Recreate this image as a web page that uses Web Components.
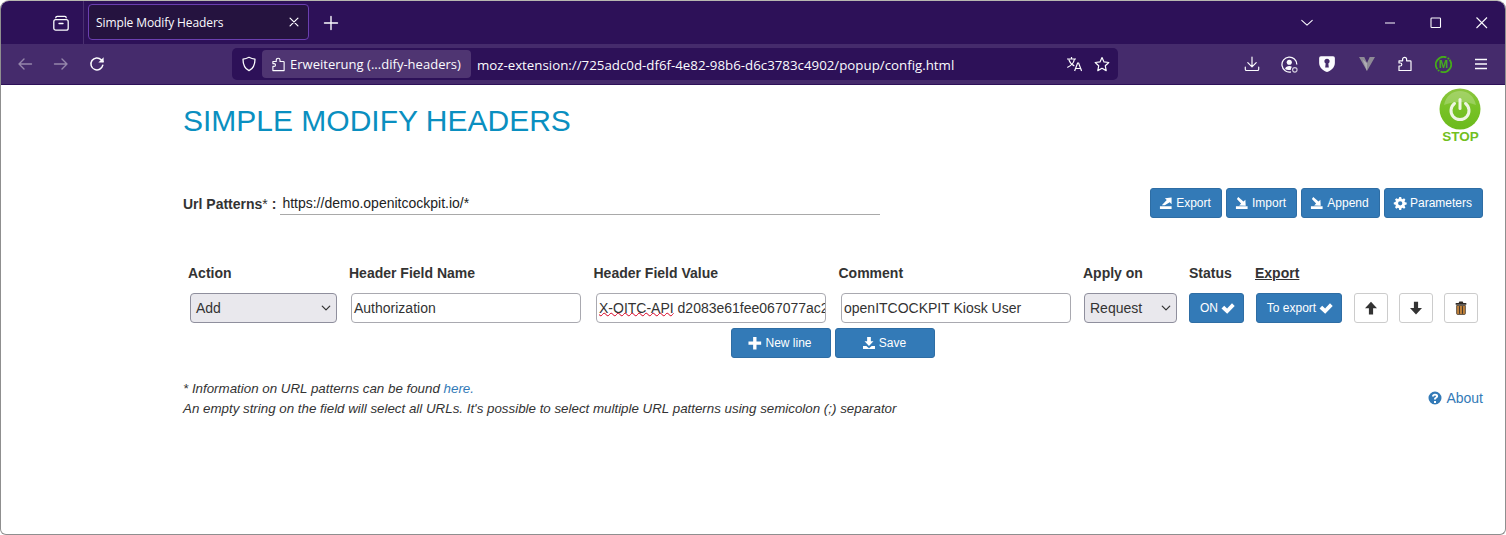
<!DOCTYPE html>
<html lang="de">
<head>
<meta charset="utf-8">
<title>Simple Modify Headers</title>
<style>
html,body{margin:0;padding:0;height:100%;background:#fff;overflow:hidden}
body{font-family:"Liberation Sans",Arial,sans-serif}
</style>
</head>
<body>
<browser-window>
  <browser-tabbar slot="tabbar"></browser-tabbar>
  <browser-navbar slot="navbar"></browser-navbar>
  <smh-page></smh-page>
</browser-window>

<script>
const ICONS = {
  tabs:'<g fill="none" stroke="currentColor" stroke-width="1.3"><rect x=".8" y="4.700" width="14.400" height="10.500" rx="2"/><path d="M2.800 2.800c0-.9.600-1.400 1.400-1.400h7.600c.8 0 1.400.5 1.400 1.400M6 8.500h4" stroke-linecap="round"/></g>',
  close:'<path d="M3.500 3.500l9 9M12.500 3.500l-9 9" stroke="currentColor" stroke-width="1.400" fill="none" stroke-linecap="round"/>',
  plus:'<path d="M8 1.500v13M1.500 8h13" stroke="currentColor" stroke-width="1.400" fill="none" stroke-linecap="round"/>',
  chevron:'<path d="M2 5l6 5.500L14 5" stroke="currentColor" stroke-width="1.200" fill="none" stroke-linecap="round" stroke-linejoin="round"/>',
  selchev:'<path d="M2 5l6 6 6-6" stroke="currentColor" stroke-width="2" fill="none" stroke-linecap="round" stroke-linejoin="round"/>',
  minimize:'<path d="M3 8h10" stroke="currentColor" stroke-width="1.100" fill="none"/>',
  maximize:'<rect x="3" y="3" width="9.500" height="9.500" rx=".8" stroke="currentColor" stroke-width="1.100" fill="none"/>',
  winclose:'<path d="M2.500 2.500l10.500 10.500M13 2.500L2.500 13" stroke="currentColor" stroke-width="1.100" fill="none"/>',
  back:'<path d="M14.500 8H2M7 3L2 8l5 5" stroke="currentColor" stroke-width="1.400" fill="none" stroke-linecap="round" stroke-linejoin="round"/>',
  forward:'<path d="M1.500 8H14M9 3l5 5-5 5" stroke="currentColor" stroke-width="1.400" fill="none" stroke-linecap="round" stroke-linejoin="round"/>',
  reload:'<path d="M13.800 9.200A6 6 0 1 1 12.200 3.700L14 5.500" stroke="currentColor" stroke-width="1.500" fill="none" stroke-linecap="round"/><path d="M14.600 1.200v5.200H9.400z" fill="currentColor"/>',
  shield:'<path d="M8 1.300c2 1.100 3.900 1.700 6 1.900 0 5.500-1.700 9.400-6 11.500C3.700 12.600 2 8.700 2 3.200c2.100-.2 4-.8 6-1.900z" stroke="currentColor" stroke-width="1.300" fill="none" stroke-linejoin="round"/>',
  puzzle:'<path d="M2 14.500V10h1.300a1.500 1.500 0 0 0 0-3H2V4.800h3.600V3.300a2 2 0 0 1 4 0v1.500h3.600c.5 0 .8.300.8.800v8.900z" stroke="currentColor" stroke-width="1.200" fill="none" stroke-linejoin="round"/>',
  translate:'<path d="M1 3h9M5.500 1v2M8.500 3C7.800 6.800 5 9.800 1.300 11.500M2.800 3.600c1 3 3 5.100 5.500 6.300" stroke="currentColor" stroke-width="1.200" fill="none"/><path d="M8.600 15l3-8h1l3 8M9.800 12.500h4.700" stroke="currentColor" stroke-width="1.200" fill="none"/>',
  star:'<path d="M8 1.500l2 4.400 4.800.6-3.500 3.300.9 4.800L8 12.300l-4.200 2.300.9-4.800L1.200 6.500 6 5.900z" stroke="currentColor" stroke-width="1.200" fill="none" stroke-linejoin="round"/>',
  download:'<path d="M8 1v9.500M3.800 6.600L8 10.800l4.200-4.200M1.300 11v2.200c0 .8.500 1.300 1.300 1.300h10.800c.8 0 1.300-.5 1.300-1.300V11" stroke="currentColor" stroke-width="1.200" fill="none" stroke-linecap="round" stroke-linejoin="round"/>',
  account:'<path d="M9.400 14.900A7 7 0 1 1 14.900 8" stroke="currentColor" stroke-width="1.200" fill="none"/><circle cx="7.800" cy="5.900" r="2.400" fill="currentColor"/><path d="M3.800 12.200c.6-2 2.100-2.800 4-2.800 1 0 1.800.2 2.400.6-.6.800-.9 1.700-.9 2.900-2 .5-4 .3-5.500-.7z" fill="currentColor"/><circle cx="13" cy="13" r="2.100" stroke="#cfc9da" stroke-width="1.100" fill="none"/>',
  bitwarden:'<path d="M1 2.600Q1 1 2.600 1H13.400Q15 1 15 2.600V7C15 11 11.500 13.800 8 15 4.500 13.800 1 11 1 7z" fill="currentColor"/><path d="M8 3.300a2.300 2.300 0 0 1 1.200 4.300l.4 3.600H6.400l.4-3.600A2.300 2.300 0 0 1 8 3.300z" fill="#452b6c"/>',
  vee:'<path d="M0 1h5.300L8 7l2.700-6H16L8 15z" fill="#8e8a96"/><path d="M3.500 3.500L8 7v8z" fill="#aeabb3"/>',
  greenm:'<path d="M2.300 12.400A7.200 7.200 0 0 1 10.800 1.400M13.700 3.600A7.200 7.200 0 0 1 5.200 14.600" stroke="#45aa1b" stroke-width="1.700" fill="none"/><circle cx="12.600" cy="2.400" r="1" fill="#45aa1b"/><circle cx="3.400" cy="13.600" r="1" fill="#45aa1b"/><text x="8" y="11.600" text-anchor="middle" font-family="Liberation Sans" font-weight="700" font-size="10.500" fill="#45aa1b">M</text>',
  menu:'<path d="M2 3.500h12M2 8h12M2 12.500h12" stroke="currentColor" stroke-width="1.300" fill="none"/>',
  export:'<path d="M.5 11h12.500v2.800H.5z" fill="currentColor"/><path d="M2.500 9.800l5.300-5.500-2-2L13 1.500v7.300l-2-2-5.300 3z" fill="currentColor"/>',
  import:'<path d="M.5 11h12.500v2.800H.5z" fill="currentColor"/><path d="M3 1l5.600 5 2-2 .4 6.500-7-.4 2-2L1.500 3.200z" fill="currentColor"/>',
  cog:'<path fill-rule="evenodd" fill="currentColor" d="M5.900.8h2.200l.4 1.900 1.100.5 1.700-1 1.500 1.500-1 1.700.5 1.100 1.900.4v2.200l-1.900.4-.5 1.100 1 1.700-1.500 1.500-1.700-1-1.100.5-.4 1.900H5.900l-.4-1.900-1.100-.5-1.700 1L1.200 12.100l1-1.700-.5-1.100L-.2 8.900V6.700l1.900-.4.500-1.100-1-1.700L2.700 2l1.700 1 1.100-.5zM7 5.400a2.400 2.400 0 1 0 0 4.800 2.400 2.400 0 0 0 0-4.800z" transform="translate(.5 .4) scale(.96)"/>',
  gplus:'<path d="M5 1h3.600v4.900H13.600v3.600H8.600v4.900H5V9.500H0V5.900h5z" fill="currentColor"/>',
  save:'<path d="M5 1h4v4.700h2.800L7 10.600 2.200 5.700H5z" fill="currentColor"/><path d="M.6 10.600h3.500L7 13l2.900-2.400h3.500v3.300H.6z" fill="currentColor"/>',
  ok:'<path d="M.5 7.500l2.700-2.700 2.900 2.800 4.900-5.300 2.700 2.600-7.500 7.900z" fill="currentColor"/>',
  up:'<path d="M7 .8l6 6.400H9.100v6.300H4.900V7.200H1z" fill="currentColor"/>',
  down:'<path d="M4.900.8h4.200v6.300H13l-6 6.400-6-6.400h3.900z" fill="currentColor"/>',
  trash:'<path d="M4.700 1.400c0-.5.400-.9.900-.9h2.800c.5 0 .9.400.9.900v.7h3.400v1.900H1.300V2.100h3.400z" fill="#2f2a26"/><path d="M2.300 4.800h9.400v8.600c0 .6-.4 1-1 1h-7.400c-.6 0-1-.4-1-1z" fill="#c0813a" stroke="#3a332c" stroke-width=".8"/><path d="M5.400 5.500v8.200M8.600 5.500v8.200" stroke="#3a332c" stroke-width="1"/>',
  question:'<path fill-rule="evenodd" fill="currentColor" d="M7 .5a6.500 6.500 0 1 1 0 13 6.500 6.500 0 0 1 0-13zM6 10v2h2v-2zM7 2.800c-1.700 0-2.900.9-3 2.600h1.900c.1-.6.500-1 1.100-1 .6 0 1 .3 1 .8 0 .5-.4.800-.9 1.100-.9.600-1.100 1.100-1.100 2.300h1.900c0-.6.200-.9.900-1.300.8-.5 1.300-1.100 1.300-2.200 0-1.500-1.300-2.300-3.100-2.300z"/>'
};
const VIEWBOX = {export:'0 0 14 15',import:'0 0 14 15',cog:'0 0 14 15',gplus:'0 0 14 15',save:'0 0 14 15',ok:'0 0 14 14',up:'0 0 14 14',down:'0 0 14 14',trash:'0 0 14 15',question:'0 0 14 14'};

class UiIcon extends HTMLElement{
  connectedCallback(){
    const n=this.getAttribute('name'), s=this.getAttribute('size')||16;
    const r=this.shadowRoot||this.attachShadow({mode:'open'});
    r.innerHTML=`<style>:host{display:inline-flex;align-items:center;justify-content:center;flex:none;line-height:0}svg{display:block}</style>
    <svg xmlns="http://www.w3.org/2000/svg" width="${s}" height="${s}" viewBox="${VIEWBOX[n]||'0 0 16 16'}" aria-hidden="true">${ICONS[n]||''}</svg>`;
  }
}
customElements.define('ui-icon',UiIcon);

function define(name,css,html){
  customElements.define(name,class extends HTMLElement{
    constructor(){super();const r=this.attachShadow({mode:'open'});r.innerHTML=`<style>${css}</style>${html}`;}
  });
}

define('browser-window',`
  :host{display:flex;flex-direction:column;height:535px;width:1506px;box-sizing:border-box;border:1px solid #8f8f8f;border-top-color:#b8b8b0;border-radius:9px 9px 6px 6px;overflow:hidden;background:#fff}
`,`<slot name="tabbar"></slot><slot name="navbar"></slot><slot></slot>`);

define('browser-tabbar',`
  :host{display:flex;align-items:stretch;height:43px;background:#2d1158;color:#fbfbfe;font-family:"Open Sans","Noto Sans",sans-serif;flex:none}
  .side{width:83px;box-sizing:border-box;border-right:1px solid #4a3070;display:flex;align-items:center;padding-left:52px}
  .tab{box-sizing:border-box;width:221px;height:36px;margin:3px 0 0 4px;border:1px solid #6b3fb0;border-radius:4px;background:#25133f;display:flex;align-items:center;padding:0 7px;font-size:12px;gap:8px}
  .tab span{flex:1;white-space:nowrap;letter-spacing:-.1px}
  .new{margin:0 0 0 14px;display:flex;align-items:center}
  .grow{flex:1}
  .all{display:flex;align-items:center;margin-right:68px}
  .win{display:flex;align-items:center;gap:30px;margin-right:15px}
`,`
  <div class="side"><ui-icon name="tabs" size="16"></ui-icon></div>
  <div class="tab"><span>Simple Modify Headers</span><ui-icon name="close" size="14"></ui-icon></div>
  <div class="new"><ui-icon name="plus" size="16"></ui-icon></div>
  <div class="grow"></div>
  <div class="all"><ui-icon name="chevron" size="14"></ui-icon></div>
  <div class="win"><ui-icon name="minimize" size="16"></ui-icon><ui-icon name="maximize" size="16"></ui-icon><ui-icon name="winclose" size="16"></ui-icon></div>
`);

define('browser-navbar',`
  :host{display:flex;align-items:center;height:41px;background:#452b6c;color:#fbfbfe;font-family:"Open Sans","Noto Sans",sans-serif;flex:none;border-bottom:1px solid #2d1158;box-sizing:border-box}
  .nav{display:flex;align-items:center;gap:20px;padding-left:16px;width:231px;box-sizing:border-box}
  .dim{color:#9586ab}
  .url{box-sizing:border-box;width:886px;height:32px;border-radius:5px;background:#2d1158;display:flex;align-items:center;padding:0 8px 0 9px;font-size:13px}
  .pill{height:28px;box-sizing:border-box;background:#4f3572;border-radius:4px;display:flex;align-items:center;gap:4px;padding:0 10px 0 9px;margin-left:5px;white-space:nowrap;letter-spacing:.02px}
  .addr{margin-left:6px;white-space:nowrap;flex:1;font-size:13.300px;line-height:16px;padding-top:1px}
  .end{display:flex;gap:12px;align-items:center}
  .tools{display:flex;align-items:center;margin-left:auto;padding-right:16px;gap:22px}
  .tools .wide{margin:0 -.5px}
  .tools .dl{margin-right:-1px}
  .tools .bw{margin:0 1px 0 -1px}
`,`
  <div class="nav"><ui-icon class="dim" name="back" size="16"></ui-icon><ui-icon class="dim" name="forward" size="16"></ui-icon><ui-icon name="reload" size="16"></ui-icon></div>
  <div class="url">
    <ui-icon name="shield" size="16"></ui-icon>
    <div class="pill"><ui-icon name="puzzle" size="15"></ui-icon><span>Erweiterung (...dify-headers)</span></div>
    <div class="addr">moz-extension://725adc0d-df6f-4e82-98b6-d6c3783c4902/popup/config.html</div>
    <div class="end"><ui-icon name="translate" size="16"></ui-icon><ui-icon name="star" size="16"></ui-icon></div>
  </div>
  <div class="tools">
    <ui-icon class="dl" name="download" size="16"></ui-icon><ui-icon class="wide" name="account" size="17"></ui-icon><ui-icon class="bw" name="bitwarden" size="18"></ui-icon><ui-icon name="vee" size="16"></ui-icon><ui-icon name="puzzle" size="16"></ui-icon><ui-icon class="wide" name="greenm" size="17"></ui-icon><ui-icon name="menu" size="16"></ui-icon>
  </div>
`);

class BsBtn extends HTMLElement{
  connectedCallback(){
    const icon=this.getAttribute('icon'), after=this.getAttribute('after'), sz=this.getAttribute('isize')||14;
    const r=this.shadowRoot||this.attachShadow({mode:'open'});
    r.innerHTML=`<style>
      :host{display:inline-flex;box-sizing:border-box;height:30px;align-items:center;justify-content:center;gap:3px;background:#337ab7;border:1px solid #2e6da4;border-radius:3px;color:#fff;font:12px/1 "Liberation Sans",Arial,sans-serif;white-space:nowrap;flex:none}
      :host([icon]){padding-right:2px}
      :host([after]){padding-left:2px}
      :host([plain]){background:#fff;border-color:#ccc;color:#333;padding:0}
    </style>${icon?`<ui-icon name="${icon}" size="${sz}"></ui-icon>`:''}<slot></slot>${after?`<ui-icon name="${after}" size="${sz}"></ui-icon>`:''}`;
  }
}
customElements.define('bs-btn',BsBtn);

define('form-box',`
  :host{display:block;box-sizing:border-box;height:30px;border:1px solid #a9a9b0;border-radius:4px;background:#fff;color:#333;font:14px/28px "Liberation Sans",Arial,sans-serif;padding:0 1px 0 2px;white-space:nowrap;overflow:hidden;flex:none}
`,`<slot></slot>`);

define('select-box',`
  :host{display:flex;align-items:center;justify-content:space-between;box-sizing:border-box;height:30px;border:1px solid #8f8f9d;border-radius:4px;background:#e9e8ed;color:#333;font:14px "Liberation Sans",Arial,sans-serif;padding:0 5px 0 5px;flex:none}
`,`<slot></slot><ui-icon name="selchev" size="10" style="color:#333"></ui-icon>`);

define('smh-page',`
  :host{display:block;flex:1;padding:0 22px 0 182px;color:#333;font-family:"Liberation Sans",Arial,sans-serif;position:relative}
  .head{display:flex;justify-content:space-between;align-items:flex-start;height:103px}
  h1{margin:18px 0 0;font-weight:400;font-size:30px;line-height:36px;color:#0a8fc0}
  .stop{display:flex;flex-direction:column;align-items:center;margin:3px 2px 0 0;color:#72bf1e;font-weight:700;font-size:13.500px;line-height:14px}
  .stop span{padding-left:1px}
  .url{display:flex;align-items:center;height:30px;font-size:14px}
  .url b{margin:2px 4px 0 0}
  .pattern{box-sizing:border-box;width:600px;height:22px;line-height:20px;margin-top:2px;border-bottom:1px solid #a9a9a9;padding-left:2px;color:#222}
  .actions{display:flex;gap:4px;margin-left:auto}
  .rules{display:grid;grid-template-columns:161px 244.500px 245px 244.500px 106px 66px 99px 45px 45px 45px;margin:47px 0 0 5px;row-gap:12px;font-size:14px;align-items:center}
  .rules b{line-height:16px}
  .u{text-decoration:underline}
  .a{margin-left:2px}.b{margin-left:2px}.c{margin-left:2.500px}.d{margin-left:1px}
  .save{display:flex;justify-content:center;gap:4px;margin:5px 0 0}
  .note{display:flex;justify-content:space-between;font-size:13.330px;line-height:20px;font-style:italic;margin-top:21px}
  a{color:#337ab7;text-decoration:none}
  .about{display:flex;align-items:center;gap:4px;font-style:normal;font-size:14px;height:38px}
  .about ui-icon{color:#337ab7}
  .sp{text-decoration:underline wavy #d70022 1px;text-underline-offset:-1px;text-decoration-skip-ink:none}
`,`
  <div class="head">
    <h1>SIMPLE MODIFY HEADERS</h1>
    <div class="stop">
      <svg width="42" height="42" viewBox="0 0 42 42" aria-hidden="true">
        <defs><linearGradient id="g" x1="0" y1="0" x2="0" y2="1"><stop offset="0" stop-color="#8cc63f"/><stop offset=".5" stop-color="#77c225"/><stop offset="1" stop-color="#6cba1c"/></linearGradient></defs>
        <circle cx="21" cy="21" r="20.500" fill="url(#g)"/>
        <path d="M5 17C7 8 13 3 21 3s14 5 16 14c-10-4-22-4-32 0z" fill="#fff" opacity=".22"/>
        <path d="M15.500 15.500a9 9 0 1 0 11 0" stroke="#eef5e2" stroke-width="3" fill="none" stroke-linecap="round"/>
        <path d="M21 11.500v9" stroke="#eef5e2" stroke-width="3" stroke-linecap="round"/>
      </svg>
      <span>STOP</span>
    </div>
  </div>
  <div class="url">
    <b>Url Patterns<span style="font-weight:400">*</span> :</b>
    <div class="pattern">https://demo.openitcockpit.io/*</div>
    <div class="actions">
      <bs-btn icon="export" style="width:72px">Export</bs-btn>
      <bs-btn icon="import" style="width:71px">Import</bs-btn>
      <bs-btn icon="import" style="width:79px">Append</bs-btn>
      <bs-btn icon="cog" style="width:99px">Parameters</bs-btn>
    </div>
  </div>
  <div class="rules">
    <b>Action</b><b>Header Field Name</b><b>Header Field Value</b><b>Comment</b><b>Apply on</b><b>Status</b><b class="u">Export</b><span></span><span></span><span></span>
    <select-box class="a" style="width:147px">Add</select-box>
    <form-box class="b" style="width:230px">Authorization</form-box>
    <form-box class="c" style="width:230px"><span class="sp">X-OITC-API</span> d2083e61fee067077ac2</form-box>
    <form-box class="c" style="width:230px">openITCOCKPIT Kiosk User</form-box>
    <select-box class="d" style="width:93px">Request</select-box>
    <bs-btn after="ok" style="width:55px">ON</bs-btn>
    <bs-btn after="ok" class="d" style="width:86px">To export</bs-btn>
    <bs-btn plain icon="up" style="width:34px"></bs-btn>
    <bs-btn plain icon="down" style="width:34px"></bs-btn>
    <bs-btn plain icon="trash" style="width:34px"></bs-btn>
  </div>
  <div class="save">
    <bs-btn icon="gplus" style="width:100px">New line</bs-btn>
    <bs-btn icon="save" style="width:100px">Save</bs-btn>
  </div>
  <div class="note">
    <div>* Information on URL patterns can be found <a href="#">here.</a><br>An empty string on the field will select all URLs. It's possible to select multiple URL patterns using semicolon (;) separator</div>
    <a class="about" href="#"><ui-icon name="question" size="14"></ui-icon>About</a>
  </div>
`);
</script>
</body>
</html>
